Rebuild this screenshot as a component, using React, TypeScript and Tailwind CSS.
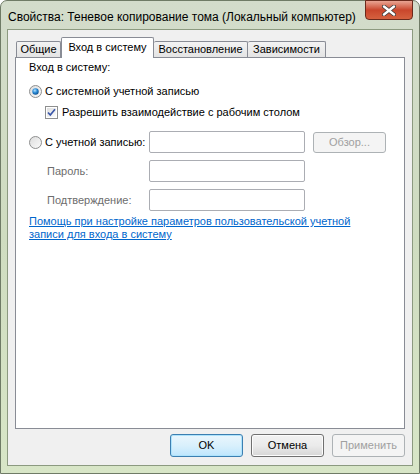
import React from "react";

function Radio({ checked }: { checked?: boolean }) {
  return (
    <svg width="13" height="13" viewBox="0 0 13 13" className="shrink-0">
      <defs>
        <linearGradient id={checked ? "rg1" : "rg0"} x1="0" y1="0" x2="1" y2="1">
          <stop offset="0" stopColor="#dcdcdc" />
          <stop offset="1" stopColor="#fbfbfb" />
        </linearGradient>
        <radialGradient id="dot" cx="0.4" cy="0.35" r="0.7">
          <stop offset="0" stopColor="#b6e3ff" />
          <stop offset="0.5" stopColor="#2a8bd6" />
          <stop offset="1" stopColor="#0a4c8c" />
        </radialGradient>
      </defs>
      <circle cx="6.5" cy="6.5" r="6" fill={`url(#${checked ? "rg1" : "rg0"})`} stroke="#8e8f8f" strokeWidth="1" />
      {checked && <circle cx="6.5" cy="6.5" r="3.2" fill="url(#dot)" />}
    </svg>
  );
}

function Checkbox() {
  return (
    <svg width="13" height="13" viewBox="0 0 13 13" className="shrink-0">
      <defs>
        <linearGradient id="cb" x1="0" y1="0" x2="1" y2="1">
          <stop offset="0" stopColor="#dedede" />
          <stop offset="1" stopColor="#fcfcfc" />
        </linearGradient>
      </defs>
      <rect x="0.5" y="0.5" width="12" height="12" fill="#ffffff" stroke="#8e8f8f" />
      <rect x="2" y="2" width="9" height="9" fill="url(#cb)" />
      <path d="M3 6.5 L5.3 9 L10 3.3" fill="none" stroke="#3a56a8" strokeWidth="1.7" />
    </svg>
  );
}

function Input() {
  return <div className="w-[156px] h-[22px] border border-[#abadb3] rounded-[2px] bg-white" />;
}

export default function App() {
  return (
    <div
      className="w-[420px] h-[474px] flex flex-col rounded-t-[7px] border border-[#6f7b66] bg-gradient-to-b from-[#d3dccb] via-[#cfdcc0] to-[#d8e6c7] text-[11px] text-black"
      style={{ fontFamily: '"Liberation Sans", Arial, sans-serif' }}
    >
      <div className="h-[28px] flex items-start shrink-0">
        <div className="pl-[7px] pt-[9px] leading-[15px] text-[12px] text-black whitespace-nowrap">
          Свойства: Теневое копирование тома (Локальный компьютер)
        </div>
        <div className="ml-auto mr-[6px] w-[48px] h-[20px] -mt-[1px] rounded-b-[4px] border border-[#6a2a1c] bg-gradient-to-b from-[#e8a493] via-[#c9462c] to-[#d5613f] flex items-center justify-center">
          <svg width="14" height="11" viewBox="0 0 14 11">
            <path d="M2 1.5 L12 9.5 M12 1.5 L2 9.5" stroke="#3b3b3b" strokeWidth="4" strokeLinecap="round" />
            <path d="M2 1.5 L12 9.5 M12 1.5 L2 9.5" stroke="#ffffff" strokeWidth="2.4" strokeLinecap="round" />
          </svg>
        </div>
      </div>
      <div className="mx-[6px] mb-[7px] flex-1 border border-[#8c9a80] bg-[#f0f0f0] flex flex-col px-[7px] pt-[7px]">
        <div className="h-[20px] flex items-end relative z-10">
          <div className="ml-[1px] w-[45px] h-[16px] border border-[#898c95] border-b-0 bg-gradient-to-b from-[#f3f3f3] to-[#e4e4e4] leading-[15px] text-center rounded-t-[2px]">
            Общие
          </div>
          <div className="w-[93px] h-[21px] -mb-[1px] border border-[#898c95] border-b-0 bg-white leading-[15px] pt-[2px] text-center rounded-t-[2px]">
            Вход в систему
          </div>
          <div className="w-[94px] h-[16px] border border-[#898c95] border-b-0 border-l-0 bg-gradient-to-b from-[#f3f3f3] to-[#e4e4e4] leading-[15px] text-center rounded-t-[2px]">
            Восстановление
          </div>
          <div className="w-[78px] h-[16px] border border-[#898c95] border-b-0 border-l-0 bg-gradient-to-b from-[#f3f3f3] to-[#e4e4e4] leading-[15px] text-center rounded-t-[2px]">
            Зависимости
          </div>
        </div>
        <div className="h-[372px] border border-[#898c95] bg-white flex flex-col pl-[13px] pt-[2px]">
          <div className="leading-[15px]">Вход в систему:</div>
          <div className="mt-[9px] h-[15px] flex items-center gap-[3px]">
            <Radio checked />
            <span className="leading-[15px]">С системной учетной записью</span>
          </div>
          <div className="mt-[6px] h-[15px] flex items-center gap-[4px] pl-[16px]">
            <Checkbox />
            <span className="leading-[15px]">Разрешить взаимодействие с рабочим столом</span>
          </div>
          <div className="mt-[11px] h-[22px] flex items-center">
            <div className="w-[120px] flex items-center gap-[3px]">
              <Radio />
              <span className="leading-[15px] whitespace-nowrap">С учетной записью:</span>
            </div>
            <Input />
            <div className="ml-[8px] w-[73px] h-[21px] border border-[#adb2b5] rounded-[3px] bg-[#f4f4f4] text-[#a0a0a0] flex items-center justify-center">
              Обзор...
            </div>
          </div>
          <div className="mt-[7px] h-[22px] flex items-center">
            <div className="w-[120px] pl-[18px] text-[#6d6d6d] leading-[15px]">Пароль:</div>
            <Input />
          </div>
          <div className="mt-[7px] h-[22px] flex items-center">
            <div className="w-[120px] pl-[18px] text-[#6d6d6d] leading-[15px]">Подтверждение:</div>
            <Input />
          </div>
          <div className="mt-[4px] leading-[13px] text-[#0066cc] underline underline-offset-[1px] whitespace-nowrap">
            Помощь при настройке параметров пользовательской учетной
            <br />
            записи для входа в систему
          </div>
        </div>
        <div className="mt-[5px] flex justify-end gap-[8px]">
          <div className="w-[73px] h-[23px] rounded-[3px] border border-[#3c7fb1] bg-gradient-to-b from-[#eaf6fd] via-[#d9f0fc] to-[#bee6fd] flex items-center justify-center shadow-[inset_0_0_0_1px_#aee3fc]">
            OK
          </div>
          <div className="w-[73px] h-[23px] rounded-[3px] border border-[#707070] bg-gradient-to-b from-[#f2f2f2] via-[#ebebeb] to-[#d6d6d6] flex items-center justify-center shadow-[inset_0_0_0_1px_#fcfcfc]">
            Отмена
          </div>
          <div className="w-[73px] h-[23px] rounded-[3px] border border-[#adb2b5] bg-[#f4f4f4] text-[#a0a0a0] flex items-center justify-center">
            Применить
          </div>
        </div>
      </div>
    </div>
  );
}
